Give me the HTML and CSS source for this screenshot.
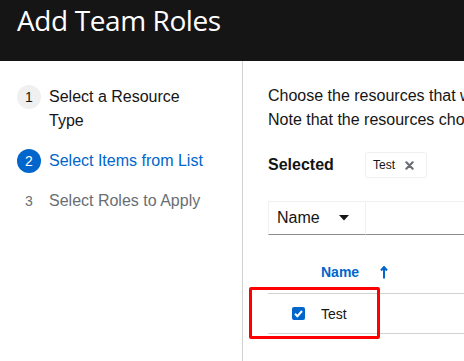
FILE: index.html
```html
<!DOCTYPE html>
<html>
<head lang="en">
    <meta charset="UTF-8">
    <title>Add Team Roles</title>
    <link rel="stylesheet" href="styles.css">
</head>
<body>
    <div class="header">
        <h1>Add Team Roles</h1>
    </div>
    <div class="wizard">
        <ol class="steps">
            <li class="step done"><span class="num">1</span><span class="label">Select a Resource Type</span></li>
            <li class="step current"><span class="num">2</span><span class="label">Select Items from List</span></li>
            <li class="step"><span class="num">3</span><span class="label">Select Roles to Apply</span></li>
        </ol>
        <div class="main">
            <p class="intro">Choose the resources that will be receiving new roles. You'll be able to select the roles to apply in the next step.</p>
            <p class="intro">Note that the resources chosen here will receive all roles chosen in the next step.</p>
            <div class="selected">
                <b>Selected</b>
                <span class="chip">Test
                    <svg width="9" height="9" viewBox="0 0 10 10"><path d="M1.5 1.5 L8.5 8.5 M8.5 1.5 L1.5 8.5" stroke="#6a6e73" stroke-width="2.4" stroke-linecap="round"/></svg>
                </span>
            </div>
            <div class="toolbar">
                <div class="select">Name
                    <svg width="10" height="6" viewBox="0 0 10 6"><path d="M0 0 H10 L5 5.5 Z" fill="#151515"/></svg>
                </div>
                <div class="search"></div>
            </div>
            <div class="thead">
                <span class="th">Name</span>
                <svg class="sort" width="8" height="13" viewBox="0 0 8 13"><path d="M4 12.5 V2 M1 4.5 L4 1 L7 4.5" stroke="#0066cc" stroke-width="2" fill="none"/></svg>
            </div>
            <div class="row">
                <span class="check"><svg width="13" height="13" viewBox="0 0 13 13"><rect width="13" height="13" rx="2" fill="#0066cc"/><path d="M3 6.8 L5.4 9.2 L10 4" stroke="#fff" stroke-width="2" fill="none"/></svg></span>
                <span class="cell">Test</span>
                <div class="mark"></div>
            </div>
        </div>
    </div>
</body>
</html>
```

FILE: styles.css
```css
*{
    margin: 0;
    padding: 0;
    box-sizing: border-box;
}
body{
    width: 464px;
    height: 361px;
    overflow: hidden;
    font-family: "Liberation Sans", Arial, sans-serif;
    font-size: 16px;
    color: #151515;
    background: #fff;
}
.header{
    height: 61px;
    background: #151515;
    padding: 3px 0 0 17px;
}
.header h1{
    font-family: "Open Sans", sans-serif;
    font-weight: 500;
    font-size: 28px;
    line-height: 34px;
    color: #fff;
    letter-spacing: -0.4px;
}
.wizard{
    display: flex;
    height: 300px;
}
.steps{
    list-style: none;
    width: 243px;
    flex: none;
    border-right: 1px solid #d2d2d2;
    padding: 24px 8px 0 17px;
}
.step{
    display: flex;
    line-height: 24px;
    margin-bottom: 16px;
    color: #6a6e73;
}
.label{
    max-width: 160px;
}
.num{
    flex: none;
    width: 24px;
    height: 24px;
    border-radius: 50%;
    text-align: center;
    font-size: 14px;
    margin-right: 8px;
}
.step.done{
    color: #151515;
}
.step.done .num{
    background: #f0f0f0;
}
.step.current{
    color: #0066cc;
}
.step.current .num{
    background: #0066cc;
    color: #fff;
}
.main{
    flex: 1;
    min-width: 0;
    padding: 23px 0 0 25px;
    overflow: hidden;
}
.intro{
    white-space: nowrap;
    line-height: 24px;
}
.selected{
    display: flex;
    align-items: center;
    margin-top: 20px;
    height: 26px;
}
.selected b{
    width: 97px;
}
.chip{
    display: flex;
    align-items: center;
    gap: 10px;
    height: 26px;
    padding: 0 12px 0 7px;
    border: 1px solid #f0f0f0;
    border-radius: 3px;
    font-size: 12px;
}
.toolbar{
    display: flex;
    margin-top: 23px;
    height: 34px;
    width: 400px;
}
.select{
    display: flex;
    align-items: center;
    justify-content: space-between;
    width: 98px;
    padding: 0 16px 0 8px;
    border: 1px solid #f0f0f0;
    border-bottom: 1px solid #8a8d90;
}
.search{
    flex: 1;
    border-top: 1px solid #f0f0f0;
    border-bottom: 1px solid #8a8d90;
}
.thead{
    display: flex;
    align-items: center;
    height: 58px;
    padding: 16px 0 0 53px;
}
.th{
    font-weight: 700;
    font-size: 14px;
    color: #0066cc;
    width: 59px;
}
.row{
    position: relative;
    display: flex;
    align-items: center;
    height: 41px;
    width: 400px;
    border-top: 1px solid #d2d2d2;
    border-bottom: 1px solid #d2d2d2;
}
.check{
    display: flex;
    margin: 0 16px 0 24px;
}
.cell{
    font-size: 14px;
}
.mark{
    position: absolute;
    left: -19px;
    top: -7px;
    width: 131px;
    height: 52px;
    border: 3px solid #f00;
    border-radius: 2px;
}
```
